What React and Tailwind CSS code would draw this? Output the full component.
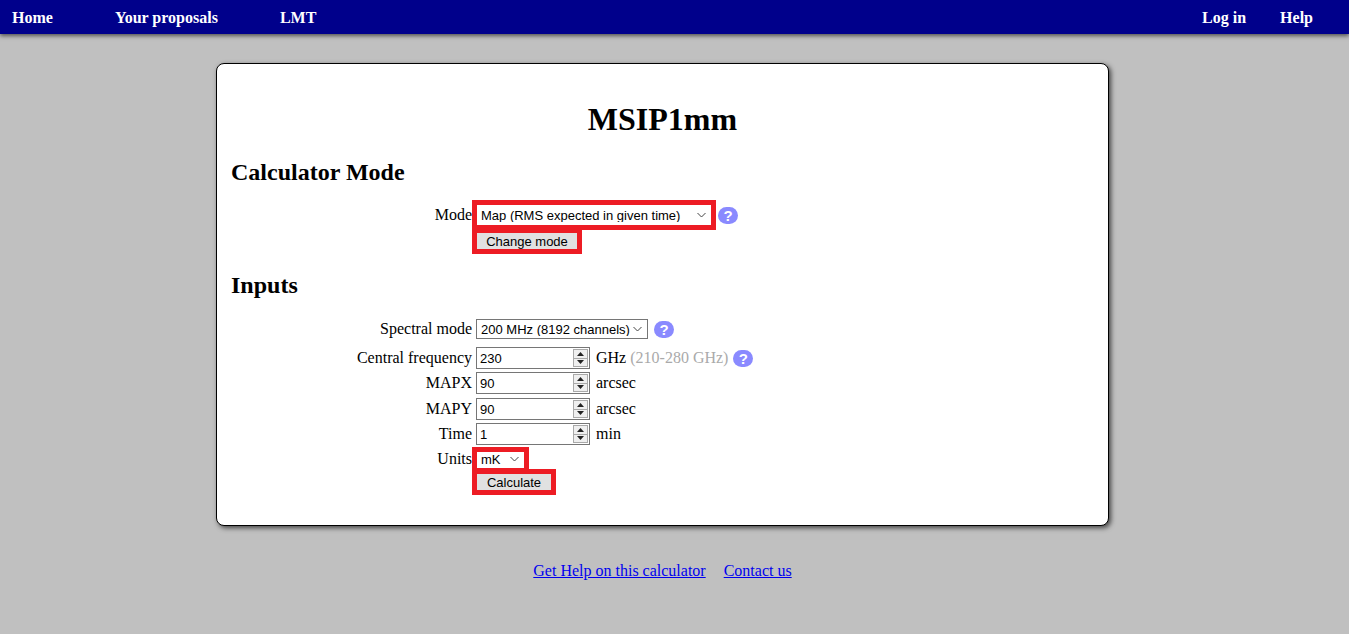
import React from "react";

const serif = "font-['Liberation_Serif','Times_New_Roman',serif]";
const sans = "font-['Liberation_Sans',Arial,sans-serif]";

function Chevron() {
  return (
    <svg width="9" height="5" viewBox="0 0 9 5" className="pointer-events-none absolute right-[6px] top-1/2 -translate-y-1/2">
      <path d="M0.5 0.5 L4.5 4.5 L8.5 0.5" fill="none" stroke="#444" strokeWidth="1" />
    </svg>
  );
}

function Select({ width, height, text, red }) {
  return (
    <div className="relative" style={{ width, height }}>
      <select
        defaultValue={text}
        className={
          "appearance-none w-full h-full bg-white text-black text-[13px] leading-none pl-[4px] pr-[12px] rounded-none " +
          sans +
          (red
            ? " border border-[#ed1c24] outline-[4px] outline-solid outline-[#ed1c24]"
            : " border border-[#767676]")
        }
      >
        <option>{text}</option>
      </select>
      <Chevron />
    </div>
  );
}

function Btn({ width, text }) {
  return (
    <button
      className={
        "h-[18px] bg-[#e1e1e1] text-black text-[13px] leading-none border border-[#ed1c24] outline-[4px] outline-solid outline-[#ed1c24] " +
        sans
      }
      style={{ width }}
    >
      {text}
    </button>
  );
}

function Help() {
  return (
    <span className={"inline-flex items-center justify-center w-[20px] h-[17px] rounded-[9px] bg-[#8a8aff] text-white text-[15px] font-bold leading-none " + sans}>
      ?
    </span>
  );
}

function Num({ value }) {
  return (
    <div className="relative w-[114px] h-[22px]">
      <input
        type="text"
        defaultValue={value}
        className={"block w-full h-full border border-[#767676] bg-white pl-[3px] text-[13px] text-black " + sans}
      />
      <div className="absolute right-[2px] top-[2px] bottom-[2px] w-[15px] flex flex-col border border-[#a9a9a9] bg-[#efefef]">
        <div className="flex-1 flex items-center justify-center border-b border-[#a9a9a9]">
          <svg width="7" height="4" viewBox="0 0 7 4"><path d="M0 4 L3.5 0 L7 4Z" fill="#222" /></svg>
        </div>
        <div className="flex-1 flex items-center justify-center">
          <svg width="7" height="4" viewBox="0 0 7 4"><path d="M0 0 L3.5 4 L7 0Z" fill="#222" /></svg>
        </div>
      </div>
    </div>
  );
}

function Row({ label, mt, children }) {
  return (
    <div className={"flex items-center leading-[18px] " + mt}>
      <div className="w-[241px] text-right text-[16px] leading-[18px] shrink-0">{label}</div>
      <div className="ml-[4px] flex items-center leading-[18px]">{children}</div>
    </div>
  );
}

export default function App() {
  return (
    <div className={"min-h-[634px] bg-[#c0c0c0] text-black overflow-hidden " + serif}>
      <nav className="h-[34px] bg-[#00008b] shadow-[0_2px_4px_#555] flex items-center justify-between text-white font-bold text-[16px] leading-[18px] pt-[2px]">
        <div className="flex items-center gap-[62px] pl-[12px]">
          <a>Home</a>
          <a>Your proposals</a>
          <a>LMT</a>
        </div>
        <div className="flex items-center gap-[34px] pr-[36px]">
          <a>Log in</a>
          <a>Help</a>
        </div>
      </nav>

      <div className="ml-[216px] w-[893px] mt-[29px] bg-white border border-black rounded-[8px] shadow-[2px_2px_5px_#444] pl-[14px] pr-[14px] pb-[34px]">
        <h1 className="text-center text-[32px] font-bold leading-[37px] mt-[37px]">MSIP1mm</h1>
        <h2 className="text-[24px] font-bold leading-[28px] mt-[20px]">Calculator Mode</h2>

        <Row label="Mode" mt="mt-[18px]">
          <Select width="236px" height="22px" text="Map (RMS expected in given time)" red />
          <span className="ml-[6px] flex"><Help /></span>
        </Row>
        <Row label="" mt="mt-[6px]">
          <Btn width="102px" text="Change mode" />
        </Row>

        <h2 className="text-[24px] font-bold leading-[28px] mt-[21px]">Inputs</h2>

        <Row label="Spectral mode" mt="mt-[20px]">
          <Select width="172px" height="20px" text="200 MHz (8192 channels)" />
          <span className="ml-[6px] flex"><Help /></span>
        </Row>
        <Row label="Central frequency" mt="mt-[8px]">
          <Num value="230" />
          <span className="ml-[6px] text-[16px] leading-[18px]">GHz</span>
          <span className="ml-[4px] text-[16px] leading-[18px] text-[#aaaaaa]">(210-280 GHz)</span>
          <span className="ml-[5px] flex"><Help /></span>
        </Row>
        <Row label="MAPX" mt="mt-[3px]">
          <Num value="90" />
          <span className="ml-[6px] text-[16px] leading-[18px]">arcsec</span>
        </Row>
        <Row label="MAPY" mt="mt-[4px]">
          <Num value="90" />
          <span className="ml-[6px] text-[16px] leading-[18px]">arcsec</span>
        </Row>
        <Row label="Time" mt="mt-[3px]">
          <Num value="1" />
          <span className="ml-[6px] text-[16px] leading-[18px]">min</span>
        </Row>
        <Row label="Units" mt="mt-[5px]">
          <Select width="49px" height="18px" text="mK" red />
        </Row>
        <Row label="" mt="mt-[5px]">
          <Btn width="76px" text="Calculate" />
        </Row>
      </div>

      <div className="ml-[216px] w-[893px] mt-[36px] flex justify-center gap-[18px] text-[16px] leading-[18px]">
        <a href="#" className="text-[#0000ee] underline">Get Help on this calculator</a>
        <a href="#" className="text-[#0000ee] underline">Contact us</a>
      </div>
    </div>
  );
}
